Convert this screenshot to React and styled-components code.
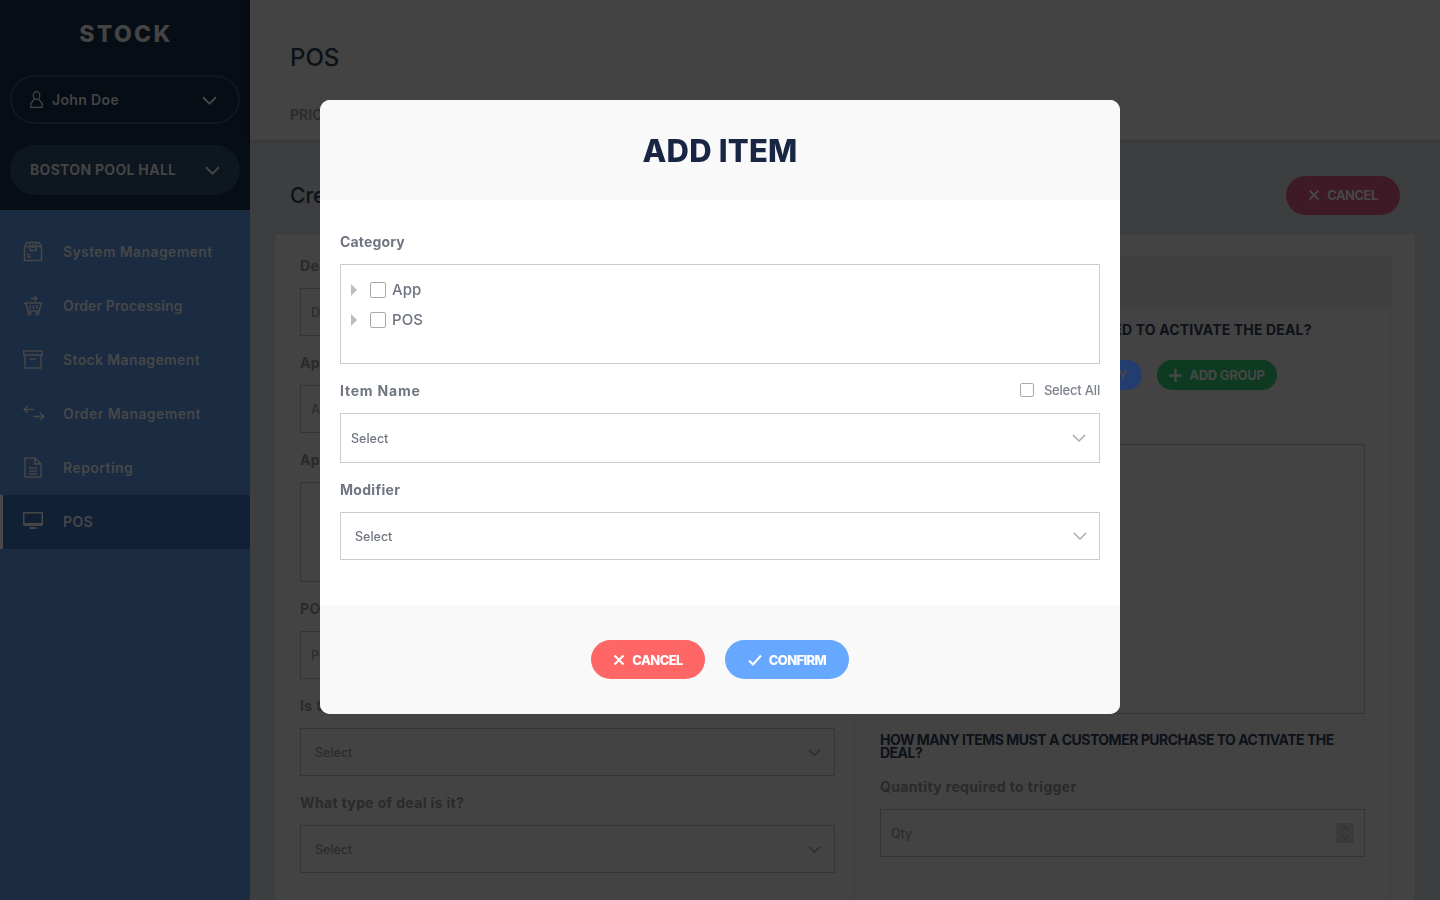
import React from "react";
import styled, { createGlobalStyle } from "styled-components";

const FONT = `Inter, "Open Sans", "Liberation Sans", sans-serif`;

const GlobalStyle = createGlobalStyle`
  html, body {
    margin: 0;
    height: 100%;
    overflow: hidden;
    background: #3c3e40;
    font-family: ${FONT};
  }
  * { box-sizing: border-box; }
`;

const Page = styled.div`
  display: flex;
  width: 1440px;
  height: 900px;
  overflow: hidden;
`;

/* sidebar */
const Sidebar = styled.aside`
  width: 250px;
  flex: none;
  background: #1a2b42;
`;

const SideHead = styled.div`
  height: 210px;
  padding: 22px 10px 0;
  background: #060d15;
`;

const Brand = styled.div`
  height: 24px;
  margin-bottom: 29px;
  text-align: center;
  text-indent: 2px;
  font-size: 23px;
  line-height: 24px;
  font-weight: 800;
  letter-spacing: 2.3px;
  color: #444;
`;

const Pill = styled.div`
  display: flex;
  align-items: center;
  height: ${(p) => (p.$filled ? "50px" : "49px")};
  margin-bottom: 21px;
  padding: ${(p) => (p.$filled ? "0 20px 2px" : "0 21px 0 18px")};
  border-radius: 25px;
  border: ${(p) => (p.$filled ? "none" : "2px solid #0e1722")};
  background: ${(p) => (p.$filled ? "#0e1620" : "transparent")};
  font-size: 14px;
  font-weight: ${(p) => (p.$filled ? 700 : 600)};
  letter-spacing: ${(p) => (p.$filled ? "0.3px" : "0.35px")};
  color: #444;
  svg.chev {
    margin-left: auto;
    margin-top: ${(p) => (p.$filled ? "2px" : "1px")};
  }
`;

const UserIcon = styled.svg`
  margin-right: 9px;
`;

const Nav = styled.nav`
  padding-top: 15px;
`;

const NavRow = styled.div`
  display: flex;
  align-items: center;
  height: 54px;
  padding: 0 0 2px ${(p) => (p.$active ? "20px" : "23px")};
  border-left: ${(p) => (p.$active ? "3px solid #4a4a4a" : "none")};
  background: ${(p) => (p.$active ? "#122035" : "transparent")};
  font-size: 14px;
  font-weight: 600;
  letter-spacing: ${(p) => p.$ls}px;
  color: #474747;
  svg { width: 20px; margin-right: 20px; flex: none; }
`;

/* page behind the dialog */
const Main = styled.main`
  flex: 1;
  min-width: 0;
  display: flex;
  flex-direction: column;
`;

const TopBar = styled.header`
  height: 140px;
  padding: 44px 40px 0;
  background: #434343;
  box-shadow: 0 1px 4px rgba(0, 0, 0, 0.15);
`;

const PageTitle = styled.h1`
  margin: 0 0 35px;
  font-size: 24px;
  line-height: 28px;
  font-weight: 500;
  color: #0d1119;
`;

const Tab = styled.div`
  font-size: 14px;
  line-height: 16px;
  font-weight: 700;
  color: #2d2d2d;
`;

const SubBar = styled.div`
  display: flex;
  align-items: center;
  justify-content: space-between;
  height: 94px;
  padding: 16px 40px 0;
`;

const SubTitle = styled.h2`
  margin: 0;
  font-size: 21px;
  font-weight: 500;
  color: #0d1119;
`;

const GhostButton = styled.div`
  display: inline-flex;
  align-items: center;
  justify-content: center;
  height: ${(p) => p.$h}px;
  width: ${(p) => p.$w}px;
  gap: 7px;
  border-radius: 20px;
  background: ${(p) => p.$bg};
  font-size: 13px;
  font-weight: 700;
  letter-spacing: ${(p) => p.$ls}px;
  color: #474747;
`;

const Card = styled.section`
  flex: 1;
  margin: 0 25px;
  padding: 24px 25px 0;
  display: flex;
  gap: 20px;
  background: #434343;
  box-shadow: 0 0 2px rgba(0, 0, 0, 0.12);
`;

const LeftCol = styled.div`
  width: 535px;
  flex: none;
`;

const BgLabel = styled.div`
  height: 16px;
  line-height: 16px;
  margin-bottom: 14px;
  font-size: 14px;
  font-weight: 700;
  letter-spacing: 0.35px;
  color: #2a2a2a;
`;

const BgField = styled.div`
  display: flex;
  align-items: center;
  justify-content: space-between;
  height: ${(p) => p.$h || 48}px;
  margin-bottom: 19px;
  padding: 0 ${(p) => p.$right || 13}px 0 ${(p) => p.$left || 14}px;
  border: 1px solid #353535;
  font-size: 12.5px;
  font-weight: 500;
  color: #2c2c2c;
`;

const RightPanel = styled.div`
  flex: 1;
  box-shadow: 0 0 2px rgba(0, 0, 0, 0.18);
`;

const PanelHead = styled.div`
  height: 49px;
  background: #3f3f3f;
`;

const PanelBody = styled.div`
  padding: 16px 25px 0;
`;

const Question = styled.div`
  font-size: 14px;
  line-height: 13px;
  font-weight: 700;
  letter-spacing: ${(p) => p.$ls}px;
  color: #0d1119;
  margin-bottom: ${(p) => p.$mb}px;
`;

const ButtonRow = styled.div`
  display: flex;
  justify-content: flex-end;
  gap: 15px;
  margin-right: 88px;
  margin-bottom: 54px;
`;

const Dropzone = styled.div`
  height: 270px;
  margin-bottom: 19px;
  border: 1px solid #353535;
`;

const Spinner = styled.div`
  width: 18px;
  height: 20px;
  display: flex;
  align-items: center;
  justify-content: center;
  background: #3b3b3b;
`;

/* dialog */
const Backdrop = styled.div`
  position: fixed;
  inset: 0;
  padding-top: 100px;
  display: flex;
  justify-content: center;
  align-items: flex-start;
`;

const Modal = styled.div`
  width: 800px;
  height: 614px;
  border-radius: 10px;
  overflow: hidden;
  background: #fff;
  display: flex;
  flex-direction: column;
`;

const ModalHead = styled.div`
  height: 100px;
  flex: none;
  display: flex;
  align-items: center;
  justify-content: center;
  background: #f9f9f9;
`;

const ModalTitle = styled.h2`
  margin: 0;
  font-size: 31px;
  font-weight: 800;
  letter-spacing: 0.2px;
  color: #182644;
`;

const ModalBody = styled.div`
  flex: 1;
  padding: 34px 20px 0;
`;

const LabelRow = styled.div`
  display: flex;
  align-items: center;
  justify-content: space-between;
  height: 16px;
  margin-bottom: ${(p) => p.$mb}px;
`;

const Label = styled.label`
  padding-bottom: 2px;
  font-size: 14px;
  font-weight: 700;
  letter-spacing: ${(p) => p.$ls}px;
  color: #6f7581;
`;

const TreeBox = styled.div`
  height: 100px;
  margin-bottom: 19px;
  padding: 10px 10px 0;
  border: 1px solid #ccc;
`;

const TreeRow = styled.div`
  display: flex;
  align-items: center;
  height: 30px;
  font-size: 15px;
  font-weight: 500;
  letter-spacing: 0.1px;
  color: #6f7581;
`;

const TreeText = styled.span`
  margin-top: -2px;
`;

const Caret = styled.span`
  width: 0;
  height: 0;
  margin-right: 13px;
  border-top: 6px solid transparent;
  border-bottom: 6px solid transparent;
  border-left: 6px solid #bdbdbd;
`;

const Check = styled.span`
  flex: none;
  display: block;
  width: ${(p) => p.$size}px;
  height: ${(p) => p.$size}px;
  margin-right: ${(p) => p.$mr}px;
  border: 1px solid #a9a9a9;
  border-radius: 2px;
  background: #fff;
`;

const SelectAll = styled.div`
  display: flex;
  align-items: center;
  padding-bottom: 2px;
  font-size: 13px;
  font-weight: 500;
  letter-spacing: -0.2px;
  color: #7c818c;
`;

const SelectBox = styled.div`
  display: flex;
  align-items: center;
  justify-content: space-between;
  height: ${(p) => p.$h}px;
  margin-bottom: ${(p) => p.$mb}px;
  padding: ${(p) => p.$pad};
  border: 1px solid #ccc;
  font-size: 12.5px;
  font-weight: 500;
  color: #6f7581;
`;

const ModalFoot = styled.div`
  height: 109px;
  flex: none;
  padding-top: 35px;
  display: flex;
  justify-content: center;
  gap: 20px;
  background: #f9f9f9;
`;

const ActionButton = styled.button`
  display: inline-flex;
  align-items: center;
  justify-content: center;
  gap: 7px;
  height: 39px;
  width: ${(p) => p.$w}px;
  padding: 0;
  border: none;
  border-radius: 20px;
  background: ${(p) => p.$bg};
  font-family: inherit;
  font-size: 13px;
  font-weight: 800;
  letter-spacing: -0.65px;
  color: #fff;
`;

const Chevron = ({ size = 14, color = "#aaa", width = 1.5 }) => (
  <svg className="chev" width={size} height={size} viewBox="0 0 14 14" fill="none" stroke={color} strokeWidth={width}>
    <path d="M1 4l6 6 6-6" />
  </svg>
);

const Cross = ({ color, size = 12 }) => (
  <svg width={size} height={size} viewBox="0 0 12 12" fill="none" stroke={color} strokeWidth="2">
    <path d="M1.5 1.5l9 9M10.5 1.5l-9 9" />
  </svg>
);

const Tick = () => (
  <svg width="14" height="12" viewBox="0 0 14 12" fill="none" stroke="#fff" strokeWidth="2">
    <path d="M1 6.5l4 4 8-9" />
  </svg>
);

const Plus = ({ color }) => (
  <svg width="13" height="13" viewBox="0 0 13 13" fill="none" stroke={color} strokeWidth="2.4">
    <path d="M6.5 0v13M0 6.5h13" />
  </svg>
);

const ICON = "#474747";

const navItems = [
  {
    label: "System Management",
    ls: 0.37,
    icon: (
      <svg height="21" viewBox="0 0 20 21" fill="none" stroke={ICON} strokeWidth="1.5">
        <path d="M4 1.5h12l2.5 4v14h-17v-14zM1.5 5.5h17M7 1.5v8h6v-8M10 3v4M4 16h4M4 13.5h3" />
      </svg>
    ),
  },
  {
    label: "Order Processing",
    ls: 0.12,
    icon: (
      <svg height="21" viewBox="0 0 20 21" fill="none" stroke={ICON} strokeWidth="1.5">
        <path d="M1 8l2 .5 2 7.5h11l2.5-8H2.5M7 10v4M10.5 10v4M14 10v4M8 3.5h6M11.5 1l2.5 2.5-2.500 2.500" />
        <circle cx="6.5" cy="18.5" r="1.4" />
        <circle cx="14.5" cy="18.5" r="1.4" />
      </svg>
    ),
  },
  {
    label: "Stock Management",
    ls: 0.37,
    icon: (
      <svg height="19" viewBox="0 0 20 19" fill="none" stroke={ICON} strokeWidth="1.5">
        <path d="M.5 1h19v4H.5zM2 5v13h16V5M7 9h6" />
      </svg>
    ),
  },
  {
    label: "Order Management",
    ls: 0.42,
    icon: (
      <svg height="16" viewBox="0 0 22 16" fill="none" stroke={ICON} strokeWidth="1.5" style={{ width: 22, marginRight: 18 }}>
        <path d="M11 4.5H1M5 1L1 4.5 5 8M10 11.5h11M17 8l4 3.5L17 15" />
      </svg>
    ),
  },
  {
    label: "Reporting",
    ls: 0.45,
    icon: (
      <svg height="21" viewBox="0 0 18 21" fill="none" stroke={ICON} strokeWidth="1.5" style={{ width: 18, marginLeft: 1, marginRight: 21 }}>
        <path d="M1 1h10l6 6v13H1zM11 1v6h6M5 11h8M5 14h8M5 17h8" />
      </svg>
    ),
  },
  {
    label: "POS",
    ls: 0.37,
    active: true,
    icon: (
      <svg height="18" viewBox="0 0 20 18">
        <path d="M1 0h18a1 1 0 0 1 1 1v12a2 2 0 0 1-1 1H1a2 2 0 0 1-1-1V1a1 1 0 0 1 1-1z" fill={ICON} />
        <path d="M1.5 1.5h17v9.5h-17z" fill="#122035" />
        <path d="M6.5 15h7v2h-7z" fill={ICON} />
      </svg>
    ),
  },
];

export default function App() {
  return (
    <>
      <GlobalStyle />
      <Page>
        <Sidebar>
          <SideHead>
            <Brand>STOCK</Brand>
            <Pill>
              <UserIcon width="13" height="17" viewBox="0 0 13 17" fill="none" stroke="#474747" strokeWidth="1.2">
                <ellipse cx="6.5" cy="4.5" rx="3.3" ry="3.8" />
                <path d="M4.5 8L.8 12.5v3.8h11.4v-3.800L8.500 8" />
              </UserIcon>
              John Doe
              <Chevron size={15} color="#474747" width={1.8} />
            </Pill>
            <Pill $filled>
              BOSTON POOL HALL
              <Chevron size={15} color="#474747" width={1.8} />
            </Pill>
          </SideHead>
          <Nav>
            {navItems.map((item) => (
              <NavRow key={item.label} $active={item.active} $ls={item.ls}>
                {item.icon}
                {item.label}
              </NavRow>
            ))}
          </Nav>
        </Sidebar>

        <Main>
          <TopBar>
            <PageTitle>POS</PageTitle>
            <Tab>PRICING</Tab>
          </TopBar>
          <SubBar>
            <SubTitle>Create Deal</SubTitle>
            <GhostButton $w={114} $h={39} $bg="#3e1a27" $ls={-0.5}>
              <Cross color="#474747" />
              CANCEL
            </GhostButton>
          </SubBar>
          <Card>
            <LeftCol>
              <BgLabel>Deal Name</BgLabel>
              <BgField $left={10}>Deal Name</BgField>
              <BgLabel>Applies To</BgLabel>
              <BgField $left={10}>Applies To</BgField>
              <BgLabel>Applied Items</BgLabel>
              <BgField $h={100} />
              <BgLabel>POS Name</BgLabel>
              <BgField $left={10}>POS Name</BgField>
              <BgLabel>Is this deal active?</BgLabel>
              <BgField>
                Select
                <Chevron size={13} color="#2c2c2c" />
              </BgField>
              <BgLabel>What type of deal is it?</BgLabel>
              <BgField>
                Select
                <Chevron size={13} color="#2c2c2c" />
              </BgField>
            </LeftCol>
            <RightPanel>
              <PanelHead />
              <PanelBody>
                <Question $mb={24} $ls={0.16}>
                  WHAT ITEMS MUST BE PURCHASED TO ACTIVATE THE DEAL?
                </Question>
                <ButtonRow>
                  <GhostButton $w={150} $h={30} $bg="#223d6e" $ls={-0.25}>
                    <Plus color="#474747" />
                    ADD CATEGORY
                  </GhostButton>
                  <GhostButton $w={120} $h={30} $bg="#0d3a20" $ls={-0.25}>
                    <Plus color="#474747" />
                    ADD GROUP
                  </GhostButton>
                </ButtonRow>
                <Dropzone />
                <Question $mb={20} $ls={-0.5}>
                  HOW MANY ITEMS MUST A CUSTOMER PURCHASE TO ACTIVATE THE DEAL?
                </Question>
                <BgLabel>Quantity required to trigger</BgLabel>
                <BgField $left={10} $right={10}>
                  Qty
                  <Spinner>
                    <svg width="10" height="16" viewBox="0 0 10 16" fill="none" stroke="#2c2c2c" strokeWidth="1">
                      <path d="M1 6l4-4 4 4M1 10l4 4 4-4" />
                    </svg>
                  </Spinner>
                </BgField>
              </PanelBody>
            </RightPanel>
          </Card>
        </Main>

        <Backdrop>
          <Modal>
            <ModalHead>
              <ModalTitle>ADD ITEM</ModalTitle>
            </ModalHead>
            <ModalBody>
              <LabelRow $mb={14}>
                <Label $ls={0.15}>Category</Label>
              </LabelRow>
              <TreeBox>
                <TreeRow>
                  <Caret />
                  <Check $size={16} $mr={6} />
                  <TreeText>App</TreeText>
                </TreeRow>
                <TreeRow>
                  <Caret />
                  <Check $size={16} $mr={6} />
                  <TreeText>POS</TreeText>
                </TreeRow>
              </TreeBox>
              <LabelRow $mb={14}>
                <Label $ls={0.8}>Item Name</Label>
                <SelectAll>
                  <Check $size={14} $mr={10} />
                  Select All
                </SelectAll>
              </LabelRow>
              <SelectBox $h={50} $mb={19} $pad="0 13px 0 10px">
                Select
                <Chevron />
              </SelectBox>
              <LabelRow $mb={14}>
                <Label $ls={0.3}>Modifier</Label>
              </LabelRow>
              <SelectBox $h={48} $mb={0} $pad="0 12px 0 14px">
                Select
                <Chevron />
              </SelectBox>
            </ModalBody>
            <ModalFoot>
              <ActionButton $w={114} $bg="#ff6666">
                <Cross color="#fff" />
                CANCEL
              </ActionButton>
              <ActionButton $w={124} $bg="#66a8ff">
                <Tick />
                CONFIRM
              </ActionButton>
            </ModalFoot>
          </Modal>
        </Backdrop>
      </Page>
    </>
  );
}
